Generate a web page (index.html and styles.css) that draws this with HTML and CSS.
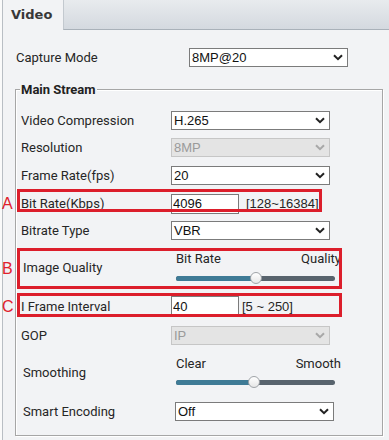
FILE: index.html
```html
<!DOCTYPE html>
<html lang="en">
<head>
    <meta charset="UTF-8">
    <meta name="viewport" content="width=device-width, initial-scale=1.0">
    <title>Video</title>
    <link rel="stylesheet" href="styles.css">
</head>
<body>
    <div class="page">
        <!-- Tabs -->
        <div class="tabs">
            <div class="tab">Video</div>
            <div class="tab-rest"></div>
        </div>

        <div class="content">
            <div class="row capture">
                <label>Capture Mode</label>
                <div class="select wide"><span>8MP@20</span><svg width="10" height="7" viewBox="0 0 10 7"><polyline points="1,1.2 5,5.2 9,1.2"/></svg></div>
            </div>

            <!-- Main stream settings -->
            <fieldset class="group">
                <legend>Main Stream</legend>

                <div class="row first">
                    <label>Video Compression</label>
                    <div class="select"><span>H.265</span><svg width="10" height="7" viewBox="0 0 10 7"><polyline points="1,1.2 5,5.2 9,1.2"/></svg></div>
                </div>
                <div class="row">
                    <label>Resolution</label>
                    <div class="select disabled"><span>8MP</span><svg width="10" height="7" viewBox="0 0 10 7"><polyline points="1,1.2 5,5.2 9,1.2"/></svg></div>
                </div>
                <div class="row">
                    <label>Frame Rate(fps)</label>
                    <div class="select"><span>20</span><svg width="10" height="7" viewBox="0 0 10 7"><polyline points="1,1.2 5,5.2 9,1.2"/></svg></div>
                </div>
                <div class="row bitrate">
                    <label>Bit Rate(Kbps)</label>
                    <input class="input" type="text" value="4096">
                    <span class="hint">[128~16384]</span>
                    <span class="mark mark-a"></span>
                    <span class="tag tag-a">A</span>
                </div>
                <div class="row type">
                    <label>Bitrate Type</label>
                    <div class="select"><span>VBR</span><svg width="10" height="7" viewBox="0 0 10 7"><polyline points="1,1.2 5,5.2 9,1.2"/></svg></div>
                </div>
                <div class="row quality">
                    <label>Image Quality</label>
                    <div class="slider">
                        <div class="slider-labels"><span>Bit Rate</span><span>Quality</span></div>
                        <div class="track-area">
                            <div class="track"><div class="fill" style="width: 50%"></div><span class="thumb" style="left: 50%"></span></div>
                        </div>
                    </div>
                    <span class="mark mark-b"></span>
                    <span class="tag tag-b">B</span>
                </div>
                <div class="row iframe">
                    <label>I Frame Interval</label>
                    <input class="input" type="text" value="40">
                    <span class="hint near">[5 ~ 250]</span>
                    <span class="mark mark-c"></span>
                    <span class="tag tag-c">C</span>
                </div>
                <div class="row gop">
                    <label>GOP</label>
                    <div class="select disabled"><span>IP</span><svg width="10" height="7" viewBox="0 0 10 7"><polyline points="1,1.2 5,5.2 9,1.2"/></svg></div>
                </div>
                <div class="row smooth">
                    <label>Smoothing</label>
                    <div class="slider">
                        <div class="slider-labels"><span>Clear</span><span>Smooth</span></div>
                        <div class="track-area">
                            <div class="track"><div class="fill" style="width: 49%"></div><span class="thumb" style="left: 49%"></span></div>
                        </div>
                    </div>
                </div>
                <div class="row smart">
                    <label>Smart Encoding</label>
                    <div class="select"><span>Off</span><svg width="10" height="7" viewBox="0 0 10 7"><polyline points="1,1.2 5,5.2 9,1.2"/></svg></div>
                </div>
            </fieldset>
        </div>
    </div>
</body>
</html>
```

FILE: styles.css
```css
* {
    margin: 0;
    padding: 0;
    box-sizing: border-box;
}
body {
    background-color: #fafafa;
    font-family: Roboto, 'Liberation Sans', sans-serif;
    font-size: 13px;
    color: #262626;
}
.page {
    margin-left: 2px;
    border-left: 1px solid #b9bec4;
    background-color: #f2f3f5;
    height: 440px;
}
.tabs {
    display: flex;
    height: 30px;
}
.tab {
    width: 60px;
    padding-left: 8px;
    line-height: 29px;
    font-family: 'DejaVu Sans', sans-serif;
    font-weight: bold;
    font-size: 13px;
    color: #383838;
}
.tab-rest {
    flex: 1;
    background: linear-gradient(#e8ebee, #d4d9df);
    border-left: 1px solid #c3c9cf;
    border-bottom: 1px solid #a9b1b9;
}
.content {
    padding-top: 17px;
}
.row {
    position: relative;
    display: flex;
    align-items: center;
    height: 28px;
}
.row label {
    width: 150px;
    flex-shrink: 0;
}
.row.capture {
    height: 21px;
    padding-left: 13px;
}
.row.capture label {
    width: 173px;
}
.row.first { height: 26px; }
.row.bitrate { height: 29px; }
.row.type { height: 24px; }
.row.quality { height: 51px; }
.row.iframe { height: 26px; }
.row.gop { height: 32px; }
.row.smooth { height: 42px; }
.row.smart { height: 36px; }
.row.quality label, .row.smooth label, .row.smart label {
    padding-left: 2px;
}
.row.smart .select {
    margin-left: 4px;
}

/* group box */
.group {
    margin: 14px 0 0 12px;
    width: 368px;
    border: 1px solid #a6a6a6;
    padding: 10px 5px 6px 5px;
    box-shadow: 1px 1px 0 #fff, inset 1px 1px 0 #fff;
}
.group legend {
    padding: 0 1px;
    margin-left: -1px;
    font-weight: bold;
    line-height: 15px;
    color: #222;
    background-color: #f2f3f5;
}

/* controls */
.select {
    width: 159px;
    height: 19px;
    border: 1px solid #7b7b7b;
    background-color: #fff;
    display: flex;
    align-items: center;
    justify-content: space-between;
    padding: 0 4px 0 2px;
    font-family: 'Liberation Sans', Arial, sans-serif;
    font-size: 13px;
    color: #111;
}
.select svg polyline {
    fill: none;
    stroke: #222;
    stroke-width: 2;
}
.select.wide {
    width: 159px;
}
.select.disabled {
    background-color: #e4e4e4;
    border-color: #c6c6c6;
    color: #9a9a9a;
}
.select.disabled svg polyline {
    stroke: #a8a8a8;
}
.input {
    width: 68px;
    height: 20px;
    border: 1px solid #7b7b7b;
    background-color: #fff;
    padding: 0 1px;
    font-family: 'Liberation Sans', Arial, sans-serif;
    font-size: 13px;
    color: #111;
    outline: none;
}
.hint {
    margin-left: 7px;
    font-family: 'Liberation Sans', Arial, sans-serif;
}
.hint.near {
    margin-left: 3px;
}

/* slider */
.slider {
    margin-left: 5px;
    width: 165px;
}
.slider-labels {
    display: flex;
    justify-content: space-between;
    line-height: 16px;
}
.track-area {
    height: 12px;
    margin-top: 5px;
    display: flex;
    align-items: center;
}
.track {
    position: relative;
    width: 159px;
    height: 5px;
    border-radius: 3px;
    background-color: #58636d;
}
.fill {
    height: 100%;
    border-radius: 3px 0 0 3px;
    background-color: #3f7b96;
}
.thumb {
    position: absolute;
    top: -4px;
    width: 12px;
    height: 12px;
    margin-left: -6px;
    border-radius: 50%;
    background: linear-gradient(#fff, #e6e6e6);
    border: 1px solid #a0a4a8;
}

/* red annotation boxes */
.mark {
    position: absolute;
    left: -4px;
    border: 3px solid #dc1e2b;
}
.mark-a { top: 0; width: 305px; height: 23px; }
.mark-b { top: 6px; width: 325px; height: 41px; }
.mark-c { top: 0; width: 325px; height: 24px; }
.tag {
    position: absolute;
    left: -19px;
    font-family: 'Liberation Sans', Arial, sans-serif;
    font-size: 16px;
    line-height: 16px;
    color: #e0202c;
}
.tag-a { top: 7px; }
.tag-b { top: 19px; }
.tag-c { top: 6px; }
```
